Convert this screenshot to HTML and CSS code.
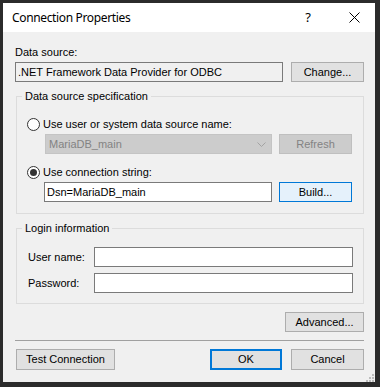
FILE: index.html
```html
<!DOCTYPE html>
<html>
<head>
<meta charset="utf-8">
<link rel="stylesheet" href="styles.css">
</head>
<body>
<div class="window">
  <div class="titlebar">
    <span class="title">Connection Properties</span>
    <span class="tb-btn help">?</span>
    <span class="tb-btn close"><svg width="11" height="11" viewBox="0 0 11 11"><path d="M0.5 0.5L10.5 10.5M10.5 0.5L0.5 10.5" stroke="#000" stroke-width="1" fill="none"/></svg></span>
  </div>
  <div class="content">
    <div class="label">Data source:</div>
    <div class="row ds-row">
      <div class="textbox readonly">.NET Framework Data Provider for ODBC</div>
      <div class="btn w73">Change...</div>
    </div>

    <fieldset class="group">
      <legend>Data source specification</legend>
      <div class="group-body spec-body">
        <div class="radio-row"><span class="radio"></span><span>Use user or system data source name:</span></div>
        <div class="row indent">
          <div class="combo"><span>MariaDB_main</span><svg width="9" height="5" viewBox="0 0 9 5"><path d="M0.5 0.5L4.5 4.5L8.5 0.5" stroke="#a3a3a3" stroke-width="1" fill="none"/></svg></div>
          <div class="btn w73 disabled">Refresh</div>
        </div>
        <div class="radio-row second"><span class="radio checked"></span><span>Use connection string:</span></div>
        <div class="row indent conn-row">
          <div class="textbox">Dsn=MariaDB_main</div>
          <div class="btn w73 focus">Build...</div>
        </div>
      </div>
    </fieldset>

    <fieldset class="group">
      <legend>Login information</legend>
      <div class="group-body login-body">
        <div class="field-row"><span class="field-label">User name:</span><div class="textbox"></div></div>
        <div class="field-row"><span class="field-label">Password:</span><div class="textbox"></div></div>
      </div>
    </fieldset>

    <div class="adv-row"><div class="btn adv">Advanced...</div></div>
    <div class="sep"></div>
    <div class="bottom-row">
      <div class="btn test">Test Connection</div>
      <div class="spacer"></div>
      <div class="btn ok">OK</div>
      <div class="btn w73 cancel">Cancel</div>
    </div>
  </div>
  <svg class="grip" width="8" height="8" viewBox="0 0 8 8"><rect x="6" y="0" width="2" height="2" fill="#bcbcbc"/><rect x="3" y="3" width="2" height="2" fill="#bcbcbc"/><rect x="6" y="3" width="2" height="2" fill="#bcbcbc"/><rect x="0" y="6" width="2" height="2" fill="#bcbcbc"/><rect x="3" y="6" width="2" height="2" fill="#bcbcbc"/><rect x="6" y="6" width="2" height="2" fill="#bcbcbc"/></svg>
</div>
</body>
</html>
```

FILE: styles.css
```css
* { box-sizing: border-box; }
html, body { margin: 0; padding: 0; }
body {
  background: #2b2b2b;
  width: 380px;
  height: 387px;
  overflow: hidden;
  font-family: "Liberation Sans", Arial, sans-serif;
  font-size: 11px;
  line-height: 13px;
  color: #000;
}
.window {
  position: relative;
  margin: 3px 0 0 3px;
  width: 372px;
  height: 379px;
  background: #f0f0f0;
  display: flex;
  flex-direction: column;
}
.titlebar {
  height: 29px;
  flex: none;
  background: #fff;
  display: flex;
  align-items: center;
}
.title {
  flex: 1;
  padding-left: 9px;
  font-family: "Noto Sans", sans-serif;
  font-size: 12px;
  letter-spacing: -0.35px;
  line-height: 16px;
}
.tb-btn {
  height: 29px;
  display: flex;
  align-items: center;
  justify-content: center;
}
.help {
  width: 46px;
  padding-right: 4px;
  font-family: "Noto Sans", sans-serif;
  font-size: 13px;
}
.close { width: 42px; }

.content {
  flex: 1;
  padding: 14px 11px 12px 12px;
  display: flex;
  flex-direction: column;
}
.label { height: 13px; }
.row { display: flex; gap: 8px; margin-top: 3px; }
.textbox {
  flex: 1;
  height: 20px;
  border: 1px solid #7a7a7a;
  background: #fff;
  padding: 0 2px;
  display: flex;
  align-items: center;
  white-space: nowrap;
  overflow: hidden;
}
.textbox.readonly { background: #f0f0f0; }
.btn {
  flex: none;
  height: 20px;
  border: 1px solid #adadad;
  background: #e1e1e1;
  display: flex;
  align-items: center;
  justify-content: center;
  white-space: nowrap;
}
.w73 { width: 73px; }
.btn.disabled { background: #cccccc; border-color: #bfbfbf; color: #838383; }
.btn.focus { background: #e5f1fb; border-color: #0078d7; }

.group {
  margin: 8px 0 0 1px;
  padding: 0;
  border: 1px solid #dcdcdc;
  min-width: 0;
}
.group legend {
  margin-left: 5px;
  padding: 0 3px;
  line-height: 13px;
}
.spec-body { padding: 14px 11px 11px 10px; }
.radio-row {
  display: flex;
  align-items: center;
  gap: 3px;
  height: 14px;
}
.radio-row.second { margin-top: 11px; }
.radio {
  width: 13px;
  height: 13px;
  border: 1px solid #333;
  border-radius: 50%;
  background: #fff;
  display: flex;
  align-items: center;
  justify-content: center;
}
.radio.checked::after {
  content: "";
  width: 7px;
  height: 7px;
  border-radius: 50%;
  background: #333;
}
.indent { margin-left: 18px; gap: 7px; }
.conn-row { margin-left: 17px; }
.combo {
  flex: 1;
  height: 20px;
  background: #cccccc;
  border: 1px solid #c4c4c4;
  color: #838383;
  display: flex;
  align-items: center;
  justify-content: space-between;
  padding: 0 5px 0 3px;
}

.login-body { padding: 12px 10px 10px 11px; }
.field-row { display: flex; align-items: center; height: 20px; }
.field-row + .field-row { margin-top: 6px; }
.field-label { width: 66px; flex: none; }

.adv-row { display: flex; justify-content: flex-end; margin-top: 8px; }
.adv { width: 79px; }
.sep { height: 1px; background: #a0a0a0; margin-top: 8px; }
.bottom-row { display: flex; margin-top: 8px; }
.bottom-row .btn { height: 21px; }
.test { width: 99px; margin-left: 1px; }
.spacer { flex: 1; }
.ok { width: 72px; border: 2px solid #0078d7; }
.cancel { margin-left: 9px; }

.grip { position: absolute; right: 1px; bottom: 0; }
```
